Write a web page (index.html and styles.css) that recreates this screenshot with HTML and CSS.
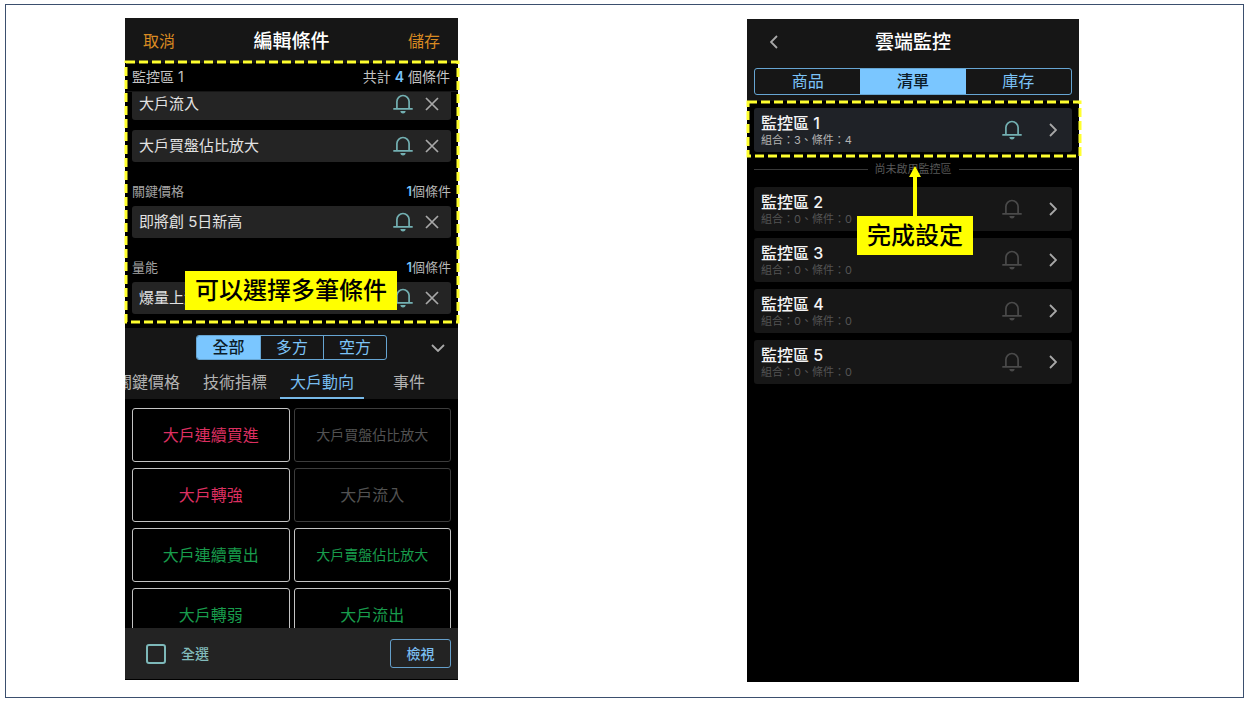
FILE: index.html
```html
<!DOCTYPE html>
<html lang="zh-Hant">
<head>
<meta charset="utf-8">
<meta name="viewport" content="width=device-width, initial-scale=1">
<title>雲端監控</title>
<link rel="stylesheet" href="styles.css">
</head>
<body>
<svg class="defs" aria-hidden="true">
  <symbol id="bell" viewBox="0 0 20 20"><path d="M3.9 14.9V7.6a6.1 6.1 0 0 1 12.2 0v7.3M.3 14.9h19.4" fill="none" stroke="currentColor" stroke-width="1.7"/><path d="M7.4 17.1h5.2a2.6 2.4 0 0 1-5.2 0z" fill="currentColor"/></symbol>
  <symbol id="cross" viewBox="0 0 14 14"><path d="M1 1l12 12M13 1L1 13" fill="none" stroke="currentColor" stroke-width="1.7"/></symbol>
  <symbol id="chevron" viewBox="0 0 8 14"><path d="M1 1l6 6-6 6" fill="none" stroke="currentColor" stroke-width="1.8"/></symbol>
</svg>
<main class="slide">
  <section class="phone editor">
    <header class="bar">
      <button class="bar-action">取消</button>
      <h1 class="title">編輯條件</h1>
      <button class="bar-action">儲存</button>
    </header>
    <div class="marked">
      <div class="summary"><span>監控區 1</span><span>共計 <b>4</b> 個條件</span></div>
      <div class="scroller">
        <div class="rule"><span>大戶流入</span><button class="icon-btn bell on" aria-label="通知"><svg><use href="#bell"/></svg></button><button class="icon-btn cross" aria-label="刪除"><svg><use href="#cross"/></svg></button></div>
        <div class="rule next"><span>大戶買盤佔比放大</span><button class="icon-btn bell on" aria-label="通知"><svg><use href="#bell"/></svg></button><button class="icon-btn cross" aria-label="刪除"><svg><use href="#cross"/></svg></button></div>
        <h2 class="group"><span>關鍵價格</span><span><b>1</b>個條件</span></h2>
        <div class="rule"><span>即將創 5日新高</span><button class="icon-btn bell on" aria-label="通知"><svg><use href="#bell"/></svg></button><button class="icon-btn cross" aria-label="刪除"><svg><use href="#cross"/></svg></button></div>
        <h2 class="group"><span>量能</span><span><b>1</b>個條件</span></h2>
        <div class="rule"><span>爆量上漲</span><button class="icon-btn bell on" aria-label="通知"><svg><use href="#bell"/></svg></button><button class="icon-btn cross" aria-label="刪除"><svg><use href="#cross"/></svg></button></div>
      </div>
      <svg class="dashes dashes-editor" aria-hidden="true"><rect x="1" y="1" width="100%" height="100%"/></svg>
      <p class="callout callout-editor">可以選擇多筆條件</p>
    </div>
    <div class="filters">
      <div class="filter-row">
        <div class="segments small"><button class="active">全部</button><button>多方</button><button>空方</button></div>
        <button class="icon-btn collapse" aria-label="收合"><svg><use href="#chevron"/></svg></button>
      </div>
      <nav class="tabs"><button>關鍵價格</button><button>技術指標</button><button class="active">大戶動向</button><button>事件</button></nav>
    </div>
    <div class="options">
      <button class="up">大戶連續買進</button><button class="off long">大戶買盤佔比放大</button>
      <button class="up">大戶轉強</button><button class="off">大戶流入</button>
      <button class="down">大戶連續賣出</button><button class="down long">大戶賣盤佔比放大</button>
      <button class="down">大戶轉弱</button><button class="down">大戶流出</button>
    </div>
    <footer class="footer">
      <label class="check"><input type="checkbox">全選</label>
      <button class="view">檢視</button>
    </footer>
  </section>

  <section class="phone monitor">
    <header class="top">
      <div class="bar">
        <button class="icon-btn back" aria-label="返回"><svg><use href="#chevron"/></svg></button>
        <h1 class="title">雲端監控</h1>
      </div>
      <div class="segments wide"><button>商品</button><button class="active">清單</button><button>庫存</button></div>
    </header>
    <div class="marked first">
      <div class="zone enabled"><div class="zone-text"><h2>監控區 1</h2><p>組合：3、條件：4</p></div><button class="icon-btn bell on" aria-label="通知"><svg><use href="#bell"/></svg></button><button class="icon-btn go" aria-label="開啟"><svg><use href="#chevron"/></svg></button></div>
      <svg class="dashes dashes-monitor" aria-hidden="true"><rect x="1" y="1" width="100%" height="100%"/></svg>
    </div>
    <div class="divider"><span>尚未啟用監控區</span></div>
    <div class="zones">
      <div class="zone"><div class="zone-text"><h2>監控區 2</h2><p>組合：0、條件：0</p></div><button class="icon-btn bell" aria-label="通知"><svg><use href="#bell"/></svg></button><button class="icon-btn go" aria-label="開啟"><svg><use href="#chevron"/></svg></button></div>
      <div class="zone"><div class="zone-text"><h2>監控區 3</h2><p>組合：0、條件：0</p></div><button class="icon-btn bell" aria-label="通知"><svg><use href="#bell"/></svg></button><button class="icon-btn go" aria-label="開啟"><svg><use href="#chevron"/></svg></button></div>
      <div class="zone"><div class="zone-text"><h2>監控區 4</h2><p>組合：0、條件：0</p></div><button class="icon-btn bell" aria-label="通知"><svg><use href="#bell"/></svg></button><button class="icon-btn go" aria-label="開啟"><svg><use href="#chevron"/></svg></button></div>
      <div class="zone"><div class="zone-text"><h2>監控區 5</h2><p>組合：0、條件：0</p></div><button class="icon-btn bell" aria-label="通知"><svg><use href="#bell"/></svg></button><button class="icon-btn go" aria-label="開啟"><svg><use href="#chevron"/></svg></button></div>
    </div>
    <div class="pointer">
      <svg viewBox="0 0 12 50" aria-hidden="true"><path d="M6 0l6 11H8v39H4V11H0z"/></svg>
      <p class="callout">完成設定</p>
    </div>
  </section>
</main>
</body>
</html>
```
FILE: styles.css
```css
* { box-sizing: border-box; }
body {
  margin: 0;
  padding: 4px 5px 3px;
  background: #fff;
  font-family: Inter, "Noto Sans CJK TC", sans-serif;
}
h1, h2, p { margin: 0; font-weight: 400; }
button {
  margin: 0;
  padding: 0;
  border: 0;
  background: none;
  color: inherit;
  font: inherit;
  cursor: pointer;
}
.defs { position: absolute; width: 0; height: 0; }

.slide {
  display: grid;
  grid-template-columns: 119fr 333fr 289fr 332fr 164fr;
  align-items: start;
  min-height: calc(100vh - 7px);
  padding: 13px 0;
  border: 1px solid #3b4f6e;
}
.phone {
  position: relative;
  display: flex;
  flex-direction: column;
  min-width: 0;
  background: #000;
  color: #d8d8d8;
}
.editor { grid-column: 2; padding-bottom: 1px; }
.monitor { grid-column: 4; margin-top: 1px; min-height: 663px; }

.bar {
  display: grid;
  grid-template-columns: 1fr auto 1fr;
  align-items: center;
  height: 45px;
  padding: 0 18px;
  background: #161616;
}
.title { grid-column: 2; padding-top: 2px; color: #fff; font-size: 19px; line-height: 24px; font-weight: 500; }
.bar-action { justify-self: start; color: #d98a22; font-size: 16px; line-height: 20px; }
.bar-action:last-child { justify-self: end; }

.icon-btn { display: flex; flex: none; color: #a8a8a8; }
.icon-btn svg { display: block; width: 100%; height: 100%; }
.bell { width: 20px; height: 20px; color: #4a4a4a; }
.bell.on { color: #73b0b2; }
.cross { width: 14px; height: 14px; }
.go, .back { width: 8px; height: 14px; }

.marked { position: relative; }
.summary {
  display: flex;
  justify-content: space-between;
  align-items: center;
  height: 29px;
  padding: 0 8px 0 7px;
  border-bottom: 1px solid #161616;
  color: #c4c4c4;
  font-size: 14px;
  line-height: 20px;
}
.summary b, .group b { color: #79c4fa; font-weight: 600; }
.scroller {
  display: flex;
  flex-direction: column;
  justify-content: flex-end;
  height: 236px;
  padding: 0 7px 14px;
  overflow: hidden;
}
.rule {
  display: flex;
  flex: none;
  align-items: center;
  gap: 12px;
  height: 32px;
  padding: 0 12px 1px 7px;
  border-radius: 3px;
  background: #242424;
  color: #e2e2e2;
  font-size: 15px;
  line-height: 20px;
}
.rule span { flex: 1; }
.next { margin-top: 10px; }
.group {
  display: flex;
  flex: none;
  justify-content: space-between;
  padding: 21px 0 7px;
  color: #a4a4a4;
  font-size: 13px;
  line-height: 16px;
}
.group span:last-child { color: #b8b8b8; }

.dashes { position: absolute; overflow: visible; pointer-events: none; }
.dashes rect { fill: none; stroke: #ffff2e; stroke-width: 3; stroke-dasharray: 9 4; }
.dashes-editor { top: -2px; left: 0; width: calc(100% - 1px); height: 260px; }
.dashes-monitor { top: 0; left: 0; width: 100%; height: 54px; }

.callout {
  padding: 4px 10px 3px;
  background: #ff0;
  color: #000;
  font-size: 24px;
  line-height: 32px;
  font-weight: 500;
  white-space: nowrap;
}
.callout-editor { position: absolute; top: 208px; left: 60px; }

.filters { background: #161616; overflow: hidden; }
.filter-row {
  display: grid;
  grid-template-columns: 1fr auto 1fr;
  align-items: center;
  padding: 7px 16px 6px;
}
.segments {
  display: grid;
  grid-template-columns: repeat(3, 1fr);
  border: 1px solid #66a5d2;
  border-radius: 3px;
  overflow: hidden;
  color: #7cc3f7;
  font-size: 16px;
  line-height: 23px;
}
.segments .active { background: #7ac6ff; color: #0c1c28; font-weight: 500; }
.small { grid-column: 2; width: 191px; }
.small button + button { border-left: 1px solid #66a5d2; }
.wide { margin: 0 7px; line-height: 25px; }
.collapse { justify-self: end; width: 8px; height: 14px; rotate: 90deg; }

.tabs { display: flex; justify-content: flex-end; gap: 3px; padding-right: 7px; }
.tabs button {
  flex: none;
  width: 84px;
  height: 33px;
  border-bottom: 2px solid transparent;
  color: #b2b2b2;
  font-size: 16px;
  line-height: 20px;
}
.tabs .active { border-color: #77b9e8; color: #77bdf0; }

.options {
  display: grid;
  grid-template-columns: 1fr 1fr;
  grid-auto-rows: 54px;
  gap: 6px 4px;
  height: 229px;
  padding: 9px 7px 0;
  overflow: hidden;
}
.options button { padding-bottom: 3px; border: 1px solid #c4c4c4; border-radius: 3px; font-size: 16px; }
.options .long { font-size: 14px; }
.options .up { color: #dc2f60; }
.options .down { color: #189c4c; }
.options .off { border-color: #3c3c3c; color: #525252; }

.footer {
  display: flex;
  align-items: center;
  justify-content: space-between;
  padding: 11px 7px 11px 21px;
  background: #232323;
}
.check { display: flex; align-items: center; gap: 15px; color: #82bcbc; font-size: 14px; line-height: 20px; font-weight: 500; }
.check input { appearance: none; width: 20px; height: 20px; margin: 0; border: 2px solid #7db8b9; border-radius: 3px; }
.view {
  width: 61px;
  height: 29px;
  padding-bottom: 2px;
  border: 1px solid #659fca;
  border-radius: 3px;
  color: #7abdf0;
  font-size: 14px;
  font-weight: 500;
}

.top { padding-bottom: 6px; background: #161616; }
.top .bar { height: 49px; padding: 0 23px 4px; }
.back { rotate: 180deg; }
.first { padding: 7px 7px 6px; }
.zone {
  display: flex;
  align-items: center;
  height: 44px;
  padding: 0 15px 0 7px;
  border-radius: 3px;
  background: #171717;
}
.zone.enabled { background: #1f2227; }
.zone-text { flex: 1; }
.zone h2 { color: #f4f4f4; font-size: 16px; line-height: 20px; font-weight: 500; }
.zone p { color: #545454; font-size: 11px; line-height: 15px; }
.zone.enabled p { color: #b4b4b4; }
.zone .bell { margin-right: 27px; }
.divider {
  display: flex;
  align-items: center;
  gap: 7px;
  padding: 3px 7px 10px;
  color: #585858;
  font-size: 11px;
  line-height: 16px;
}
.divider::before, .divider::after { content: ""; flex: 1; height: 1px; background: #383838; }
.zones { display: grid; gap: 7px; padding: 0 7px; }

.pointer {
  position: absolute;
  top: 147px;
  left: 50%;
  display: flex;
  flex-direction: column;
  align-items: center;
  translate: -56px;
}
.pointer svg { width: 12px; height: 50px; fill: #ff0; }
```
